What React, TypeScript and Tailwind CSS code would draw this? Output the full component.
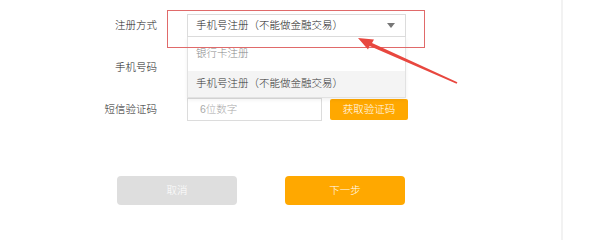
const font = { fontFamily: '"Liberation Sans", "Noto Sans CJK SC", sans-serif' };

function Label({ children }: { children: React.ReactNode }) {
  return <div className="w-[157px] shrink-0 text-right text-[10.5px] font-light text-[#222]">{children}</div>;
}

export default function App() {
  return (
    <div className="relative flex h-[240px] w-[600px] overflow-hidden bg-white" style={font}>
      <div className="flex w-[561px] flex-col pt-[14px]">
        {/* 注册方式 */}
        <div className="flex h-[23px] items-center">
          <Label>注册方式</Label>
          <div className="relative ml-[30px] h-[23px] w-[219px]">
            <div className="flex h-full items-center justify-between border border-[#dcdcdc] pl-[8px] pr-[10px] text-[10.5px] font-light text-[#222]">
              <span>手机号注册（不能做金融交易）</span>
              <span className="h-0 w-0 border-x-[4px] border-t-[5px] border-x-transparent border-t-[#777]" />
            </div>
            <div className="absolute left-0 top-full z-10 w-[219px] border border-t-0 border-[#e2e2e2] bg-white text-[10.5px] font-light shadow-[0_2px_4px_rgba(0,0,0,0.06)]">
              <div className="flex h-[34px] items-center pl-[8px] text-[#888]">银行卡注册</div>
              <div className="flex h-[26px] items-center bg-[#f4f4f4] pl-[8px] text-[#333]">手机号注册（不能做金融交易）</div>
            </div>
          </div>
        </div>

        {/* 手机号码 */}
        <div className="mt-[19px] flex h-[23px] items-center">
          <Label>手机号码</Label>
          <div className="ml-[30px] h-[23px] w-[219px] border border-[#dcdcdc]" />
        </div>

        {/* 短信验证码 */}
        <div className="mt-[19px] flex h-[23px] items-center">
          <Label>短信验证码</Label>
          <div className="ml-[30px] flex h-[23px] w-[135px] items-center border border-[#dcdcdc] pl-[12px] text-[10.5px] font-light text-[#aaa]">
            6位数字
          </div>
          <button className="ml-[8px] h-[21px] w-[78px] rounded-[2px] bg-[#ffa800] text-[10.5px] font-light text-white">
            获取验证码
          </button>
        </div>

        <div className="mt-[55px] flex">
          <button className="ml-[117px] h-[29px] w-[120px] rounded-[4px] bg-[#dedede] text-[10.5px] font-light text-white">取消</button>
          <button className="ml-[48px] h-[29px] w-[120px] rounded-[4px] bg-[#ffa800] text-[10.5px] font-light text-white">下一步</button>
        </div>
      </div>
      <div className="h-full w-[2px] bg-[#f2f2f2]" />

      {/* annotation box */}
      <div className="pointer-events-none absolute left-[167px] top-[10px] z-20 h-[38px] w-[258px] border border-[#e06a6a]" />

      {/* annotation arrow */}
      <svg className="pointer-events-none absolute left-0 top-0 z-20" width="600" height="240" viewBox="0 0 600 240">
        <polygon
          points="358,38 374,39.5 372,43 457.4,82.2 456.6,83.8 369.6,46 368,49.5"
          fill="#e8473f"
        />
      </svg>
    </div>
  );
}
